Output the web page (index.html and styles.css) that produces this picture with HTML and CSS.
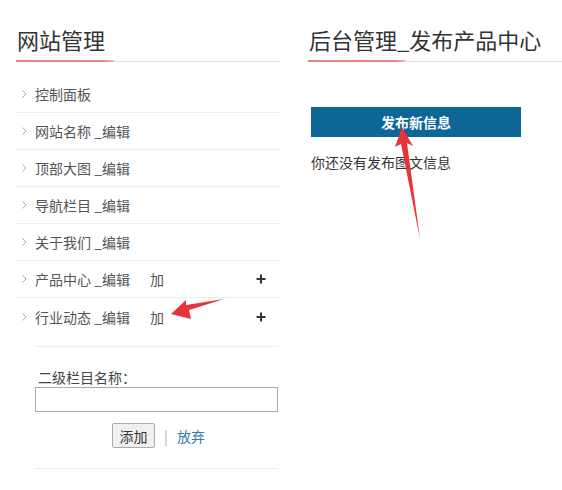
FILE: index.html
```html
<!DOCTYPE html>
<html lang="zh-CN">
<head>
<meta charset="utf-8">
<title>后台管理</title>
<link rel="stylesheet" href="styles.css">
</head>
<body>
<div class="page">
  <aside class="side">
    <h2 class="title"><span>网站管理</span></h2>
    <ul class="nav">
      <li class="item"><svg class="chev" viewBox="0 0 5 8"><polyline points="0.5,0.5 4,4 0.5,7.5"/></svg><span class="label">控制面板</span></li>
      <li class="item"><svg class="chev" viewBox="0 0 5 8"><polyline points="0.5,0.5 4,4 0.5,7.5"/></svg><span class="label">网站名称 _编辑</span></li>
      <li class="item"><svg class="chev" viewBox="0 0 5 8"><polyline points="0.5,0.5 4,4 0.5,7.5"/></svg><span class="label">顶部大图 _编辑</span></li>
      <li class="item"><svg class="chev" viewBox="0 0 5 8"><polyline points="0.5,0.5 4,4 0.5,7.5"/></svg><span class="label">导航栏目 _编辑</span></li>
      <li class="item"><svg class="chev" viewBox="0 0 5 8"><polyline points="0.5,0.5 4,4 0.5,7.5"/></svg><span class="label">关于我们 _编辑</span></li>
      <li class="item"><svg class="chev" viewBox="0 0 5 8"><polyline points="0.5,0.5 4,4 0.5,7.5"/></svg><span class="label">产品中心 _编辑</span><span class="add">加</span><svg class="plus" viewBox="0 0 10 10"><path d="M5 0.5V9.5M0.5 5H9.5"/></svg></li>
      <li class="item last"><svg class="chev" viewBox="0 0 5 8"><polyline points="0.5,0.5 4,4 0.5,7.5"/></svg><span class="label">行业动态 _编辑</span><span class="add">加</span><svg class="plus" viewBox="0 0 10 10"><path d="M5 0.5V9.5M0.5 5H9.5"/></svg></li>
    </ul>
    <div class="subform">
      <div class="sublabel">二级栏目名称：</div>
      <input class="subinput" type="text">
      <div class="actions">
        <button class="btn-add" type="button">添加</button>
        <span class="sep">|</span>
        <a class="cancel" href="#">放弃</a>
      </div>
    </div>
  </aside>
  <main class="main">
    <h2 class="title"><span>后台管理_发布产品中心</span></h2>
    <div class="content">
      <div class="publish">发布新信息</div>
      <p class="empty">你还没有发布图文信息</p>
    </div>
  </main>
</div>
<svg class="arrows" viewBox="0 0 562 490" width="562" height="490">
  <polygon points="402,127 395,147 401,144 420,239 407,143 413,146"/>
  <polygon points="171,314 186,300 186,305 224,299 189,310 191,319"/>
</svg>
</body>
</html>
```
FILE: styles.css
```css
* { box-sizing: border-box; }
html, body { margin: 0; padding: 0; background: #fff; }
body {
  font-family: "Noto Sans CJK SC", "Noto Sans", sans-serif;
  color: #555;
  font-size: 14px;
  width: 562px;
  height: 490px;
  overflow: hidden;
  position: relative;
}
.page {
  display: flex;
  gap: 28px;
  padding-left: 16px;
}
.side { width: 264px; flex: none; }
.main { flex: 1; }
.title {
  margin: 0;
  padding-top: 24px;
  height: 62px;
  font-size: 22px;
  line-height: 30px;
  font-weight: 400;
  color: #333;
  border-bottom: 1px solid #e2e2e2;
  position: relative;
}
.title span { padding-left: 1px; }
.title::after {
  content: "";
  position: absolute;
  left: 0;
  bottom: -1px;
  width: 98px;
  height: 2px;
  background: linear-gradient(to right, #e7857c 90%, #e8c8c4);
}
.nav {
  list-style: none;
  margin: 14px 0 0;
  padding: 0;
}
.item {
  display: flex;
  align-items: center;
  height: 37px;
  border-bottom: 1px solid #eee;
  padding-left: 6px;
}
.item.last { border-bottom: none; }
.chev {
  width: 5px;
  height: 8px;
  fill: none;
  stroke: #aaa;
  stroke-width: 1;
  margin-right: 8px;
  flex: none;
}
.label { width: 115px; flex: none; line-height: 20px; }
.add { line-height: 20px; }
.plus {
  width: 10px;
  height: 10px;
  margin-left: auto;
  margin-right: 14px;
  fill: none;
  stroke: #333;
  stroke-width: 2;
}
.subform {
  margin: 11px 2px 0 19px;
  border-top: 1px solid #eee;
  border-bottom: 1px solid #eee;
  padding: 20px 0 20px;
}
.sublabel {
  line-height: 20px;
  padding-left: 3px;
  color: #444;
}
.subinput {
  display: block;
  width: 243px;
  height: 25px;
  border: 1px solid #aaa;
  margin: 0;
  padding: 0 4px;
  font: inherit;
}
.actions {
  margin-top: 11px;
  display: flex;
  align-items: center;
  justify-content: center;
  gap: 9px;
  padding-left: 4px;
}
.btn-add {
  width: 43px;
  height: 25px;
  padding: 0;
  font-family: inherit;
  font-size: 14px;
  color: #333;
  background: #f0f0f0;
  border: 1px solid #aaa;
  border-radius: 2px;
}
.sep { color: #aaa; font-size: 14px; }
.cancel {
  color: #3c78a8;
  text-decoration: none;
  line-height: 20px;
}
.content { padding: 45px 0 0 3px; }
.publish {
  width: 210px;
  height: 30px;
  line-height: 30px;
  background: #0c6696;
  color: #fff;
  font-weight: 700;
  text-align: center;
  font-size: 14px;
}
.empty {
  margin: 15px 0 0;
  line-height: 20px;
  color: #333;
}
.arrows {
  position: absolute;
  left: 0;
  top: 0;
  pointer-events: none;
}
.arrows polygon { fill: #e8333a; }
```
